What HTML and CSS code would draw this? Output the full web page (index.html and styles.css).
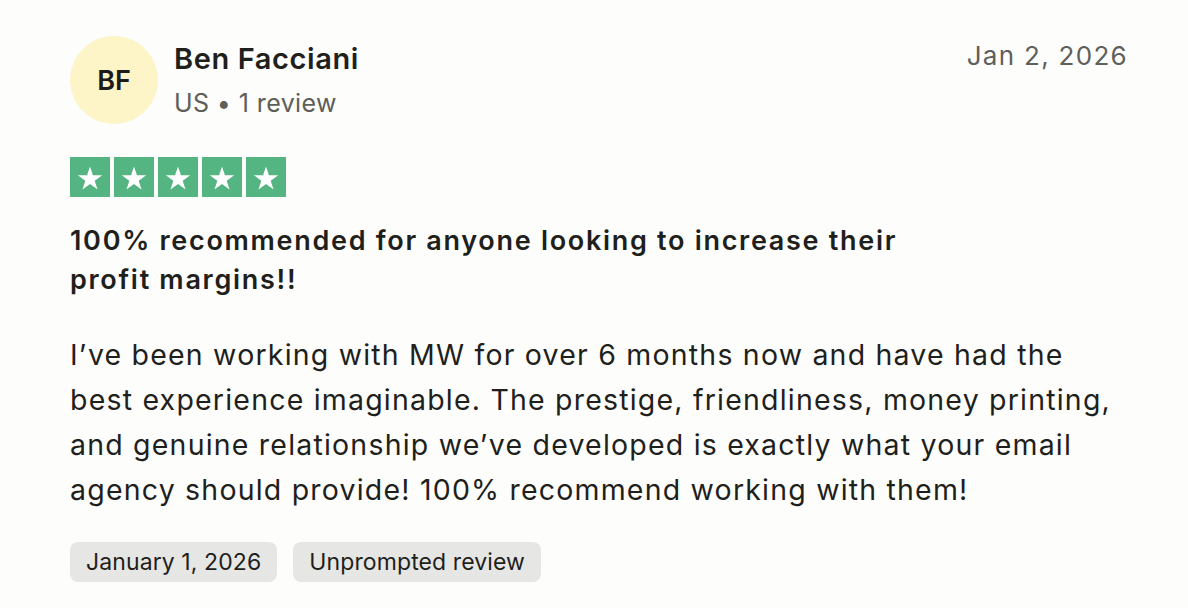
FILE: index.html
```html
<!DOCTYPE html>
<html lang="en">
<head>
<meta charset="utf-8">
<link rel="stylesheet" href="styles.css">
</head>
<body>
<article class="review">
  <header class="review-head">
    <div class="consumer">
      <div class="avatar">BF</div>
      <div class="consumer-info">
        <div class="name">Ben Facciani</div>
        <div class="meta">US • 1 review</div>
      </div>
    </div>
    <time class="posted">Jan 2, 2026</time>
  </header>
  <div class="stars">
    <span class="star"><svg viewBox="0 0 24 24"><path d="M12 3.5l2.35 7.05h7.4l-6 4.35 2.3 7.1L12 17.6l-6.05 4.4 2.3-7.1-6-4.35h7.4z" fill="#fff"/></svg></span>
    <span class="star"><svg viewBox="0 0 24 24"><path d="M12 3.5l2.35 7.05h7.4l-6 4.35 2.3 7.1L12 17.6l-6.05 4.4 2.3-7.1-6-4.35h7.4z" fill="#fff"/></svg></span>
    <span class="star"><svg viewBox="0 0 24 24"><path d="M12 3.5l2.35 7.05h7.4l-6 4.35 2.3 7.1L12 17.6l-6.05 4.4 2.3-7.1-6-4.35h7.4z" fill="#fff"/></svg></span>
    <span class="star"><svg viewBox="0 0 24 24"><path d="M12 3.5l2.35 7.05h7.4l-6 4.35 2.3 7.1L12 17.6l-6.05 4.4 2.3-7.1-6-4.35h7.4z" fill="#fff"/></svg></span>
    <span class="star"><svg viewBox="0 0 24 24"><path d="M12 3.5l2.35 7.05h7.4l-6 4.35 2.3 7.1L12 17.6l-6.05 4.4 2.3-7.1-6-4.35h7.4z" fill="#fff"/></svg></span>
  </div>
  <h2 class="title">100% recommended for anyone looking to increase their profit margins!!</h2>
  <p class="body">I’ve been working with MW for over 6 months now and have had the best experience imaginable. The prestige, friendliness, money printing, and genuine relationship we’ve developed is exactly what your email agency should provide! 100% recommend working with them!</p>
  <div class="tags">
    <span class="tag">January 1, 2026</span>
    <span class="tag">Unprompted review</span>
  </div>
</article>
</body>
</html>
```
FILE: styles.css
```css
html, body {
  margin: 0;
  padding: 0;
  background: #fdfdfc;
}
body {
  font-family: Inter, "Noto Sans", sans-serif;
  color: #1f1f1c;
}
.review {
  box-sizing: border-box;
  width: 1188px;
  padding: 36px 60px 0 70px;
}
.review-head {
  display: flex;
  justify-content: space-between;
  align-items: flex-start;
}
.consumer {
  display: flex;
  align-items: center;
  gap: 16px;
}
.avatar {
  width: 88px;
  height: 88px;
  border-radius: 50%;
  background: #fdf4c8;
  display: flex;
  align-items: center;
  justify-content: center;
  font-size: 27px;
  font-weight: 600;
  color: #1c1c1a;
}
.consumer-info {
  display: flex;
  flex-direction: column;
  gap: 8px;
  margin-top: -2px;
}
.name {
  font-size: 29px;
  font-weight: 600;
  letter-spacing: 0.6px;
  line-height: 40px;
}
.meta {
  font-size: 25px;
  color: #5e5e5a;
  line-height: 32px;
  letter-spacing: 0.4px;
}
.posted {
  font-size: 26px;
  color: #5f5f5b;
  line-height: 40px;
  margin-top: 0;
  letter-spacing: 1.3px;
}
.stars {
  display: flex;
  gap: 4px;
  margin-top: 33px;
}
.star {
  width: 40px;
  height: 40px;
  background: #54b582;
  display: flex;
  align-items: center;
  justify-content: center;
}
.star svg {
  width: 30px;
  height: 30px;
}
.title {
  margin: 24px 0 0;
  max-width: 860px;
  font-size: 27px;
  font-weight: 600;
  line-height: 39px;
  letter-spacing: 1.7px;
}
.body {
  margin: 33px 0 0;
  max-width: 1046px;
  font-size: 28.5px;
  line-height: 45px;
  letter-spacing: 1.2px;
}
.tags {
  display: flex;
  gap: 16px;
  margin-top: 30px;
}
.tag {
  background: #e6e6e4;
  border-radius: 8px;
  padding: 0 16px;
  height: 40px;
  display: flex;
  align-items: center;
  font-size: 23px;
  letter-spacing: 0.1px;
}
```
